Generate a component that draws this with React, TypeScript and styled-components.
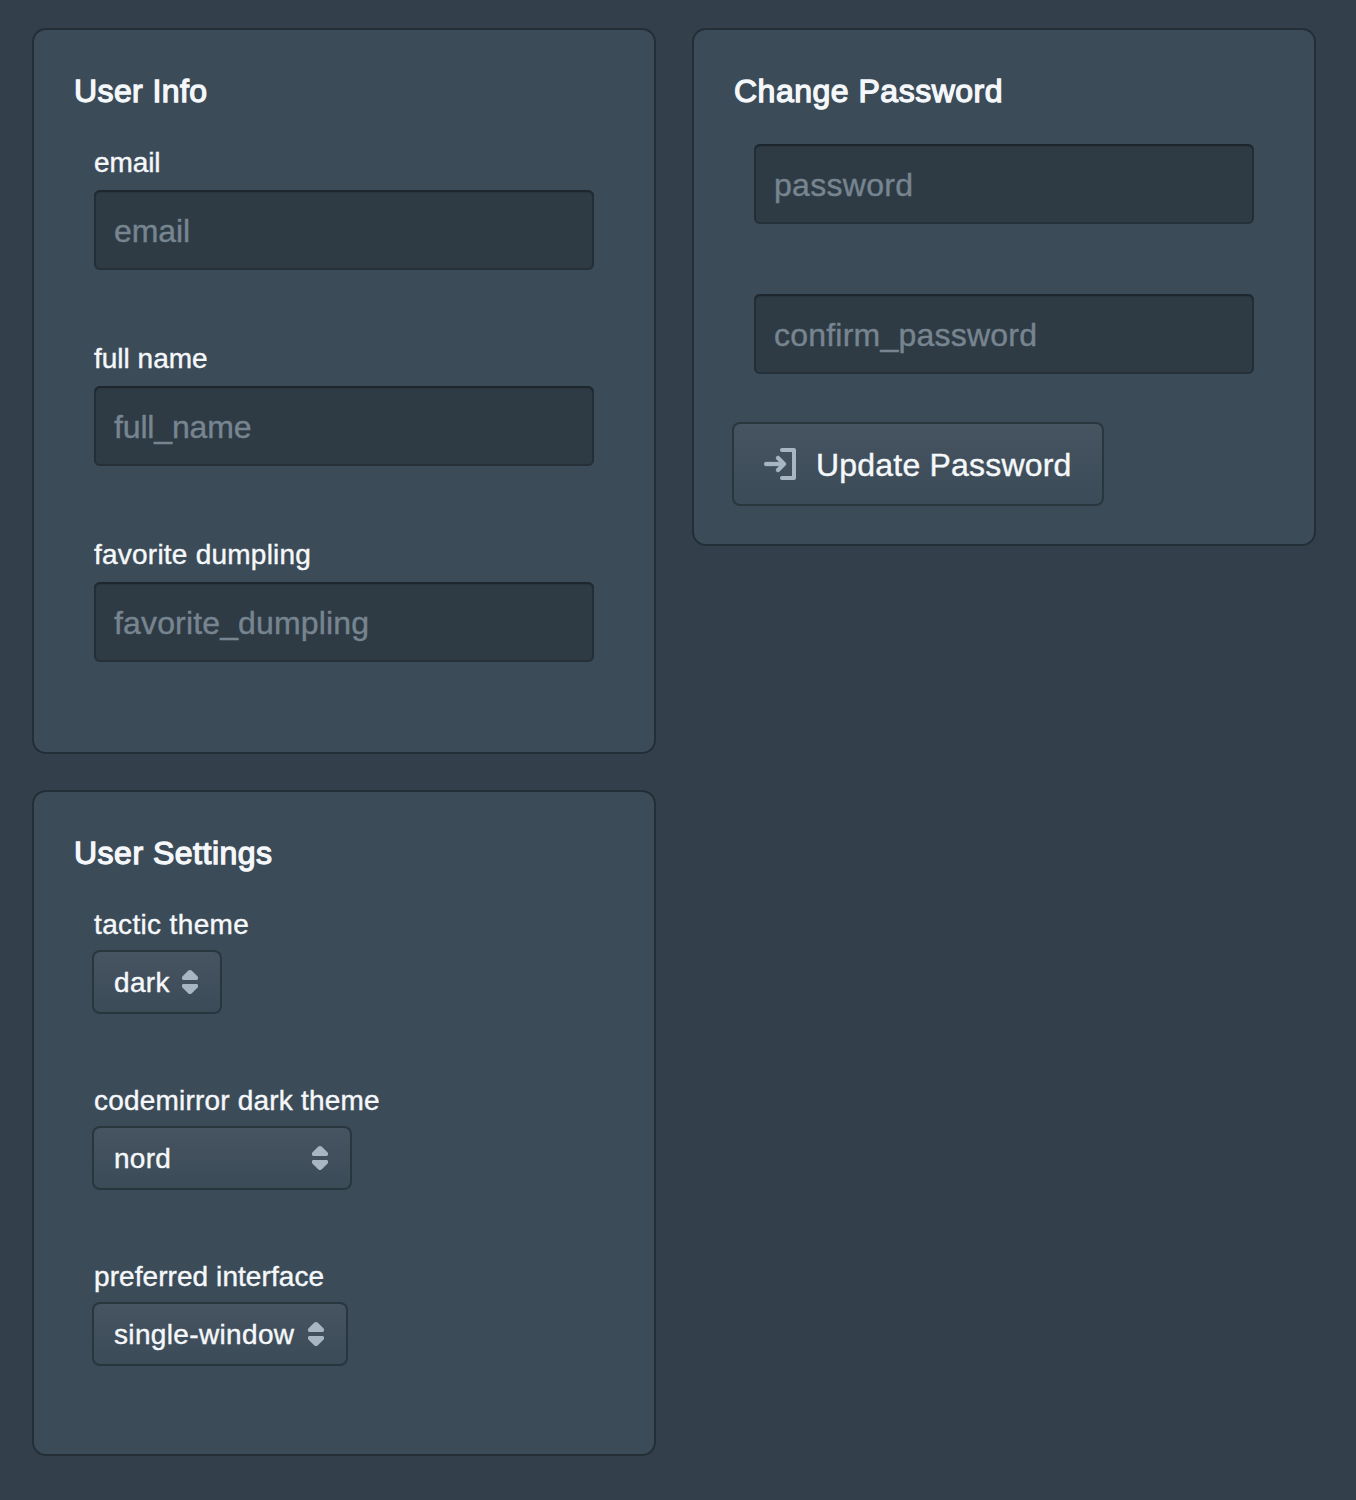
import React from "react";
import styled, { createGlobalStyle } from "styled-components";

const GlobalStyle = createGlobalStyle`
  *, *::before, *::after { box-sizing: border-box; }
  body {
    margin: 0;
    background: #333f4b;
    color: #f5f8fa;
    font-family: "Liberation Sans", Arial, sans-serif;
    -webkit-font-smoothing: antialiased;
  }
`;

const Page = styled.main`
  display: flex;
  align-items: flex-start;
  gap: 40px;
  min-height: 1500px;
  padding: 30px 34px;
`;

const Column = styled.div`
  display: flex;
  flex-direction: column;
  flex: none;
  gap: 40px;
  width: 620px;
`;

const Card = styled.section`
  padding: 40px;
  border-radius: 12px;
  background: #3c4b58;
  box-shadow: 0 0 0 2px rgba(16, 22, 26, 0.4);
`;

const Title = styled.h2<{ $track: number }>`
  margin: 0 0 32px;
  font-size: 32px;
  font-weight: 400;
  line-height: 42px;
  letter-spacing: ${(p) => p.$track}px;
  -webkit-text-stroke: 1.3px currentColor;
`;

const Fields = styled.div`
  display: flex;
  flex-direction: column;
  align-items: flex-start;
  gap: 70px;
  margin: 0 20px 50px;
`;

const Field = styled.label`
  display: flex;
  flex-direction: column;
  align-items: flex-start;
  gap: 9px;
`;

const LabelText = styled.span<{ $track: number }>`
  padding-top: 1px;
  font-size: 28px;
  line-height: 36px;
  letter-spacing: ${(p) => p.$track}px;
  white-space: nowrap;
  -webkit-text-stroke: 0.4px currentColor;
`;

const TextInput = styled.input<{ $track: number }>`
  width: 500px;
  height: 80px;
  padding: 2px 20px 0;
  border: 0;
  border-radius: 6px;
  outline: none;
  background: rgba(16, 22, 26, 0.3);
  box-shadow: inset 0 0 0 2px rgba(16, 22, 26, 0.3), inset 0 2px 2px rgba(16, 22, 26, 0.4);
  color: #f5f8fa;
  font: 400 32px "Liberation Sans", Arial, sans-serif;
  letter-spacing: ${(p) => p.$track}px;

  &::placeholder {
    color: #778590;
    opacity: 1;
    -webkit-text-stroke: 0.4px #778590;
  }
`;

const BaseButton = styled.button`
  display: flex;
  align-items: center;
  border: 0;
  border-radius: 6px;
  background: linear-gradient(rgba(255, 255, 255, 0.05), rgba(255, 255, 255, 0)) #3c4b58;
  box-shadow: 0 0 0 2px rgba(16, 22, 26, 0.4);
  color: #f5f8fa;
  font-family: inherit;
  -webkit-text-stroke: 0.4px currentColor;
  white-space: nowrap;
`;

const LargeButton = styled(BaseButton)`
  gap: 20px;
  width: 368px;
  height: 80px;
  padding: 2px 30px 0;
  font-size: 32px;
  letter-spacing: 0.2px;
`;

const SelectButton = styled(BaseButton)<{ $width: number; $track: number }>`
  justify-content: space-between;
  width: ${(p) => p.$width}px;
  height: 60px;
  padding: 0 14px 0 20px;
  font-size: 28px;
  letter-spacing: ${(p) => p.$track}px;
`;

const SelectValue = styled.span`
  padding-top: 2px;
`;

const Icon = styled.svg`
  flex: none;
  width: 32px;
  height: 32px;
  fill: #a7b6c2;
  stroke: none;
`;

const LargeIcon = styled(Icon)`
  margin-top: -2px;
`;

const LogInIcon = () => (
  <LargeIcon viewBox="0 0 16 16">
    <path
      d="M11 8c0-.28-.11-.53-.29-.71l-3-3a1.003 1.003 0 00-1.42 1.42L7.59 7H1c-.55 0-1 .45-1 1s.45 1 1 1h6.59L6.29 10.29a1.003 1.003 0 001.42 1.42l3-3c.18-.18.29-.43.29-.71z"
      stroke="#a7b6c2"
      strokeWidth="0.15"
    />
    <path d="M15 0H9c-.55 0-1 .45-1 1s.45 1 1 1h5v12H9c-.55 0-1 .45-1 1s.45 1 1 1h6c.55 0 1-.45 1-1V1c0-.55-.45-1-1-1z" />
  </LargeIcon>
);

const DoubleCaretIcon = () => (
  <Icon viewBox="0 0 16 16">
    <path d="M8 2c.3 0 .55.1.8.3l2.9 2.8c.2.2.3.4.3.7v.5c0 .4-.3.7-.7.7H4.7c-.4 0-.7-.3-.7-.7v-.5c0-.3.1-.5.3-.7l2.9-2.8c.25-.2.5-.3.8-.3zM8 14c.3 0 .55-.1.8-.3l2.9-2.8c.2-.2.3-.4.3-.7v-.5c0-.4-.3-.7-.7-.7H4.7c-.4 0-.7.3-.7.7v.5c0 .3.1.5.3.7l2.9 2.8c.25.2.5.3.8.3z" />
  </Icon>
);

const infoFields = [
  { label: "email", name: "email", track: -0.1, inputTrack: -0.1 },
  { label: "full name", name: "full_name", track: 0, inputTrack: -0.15 },
  { label: "favorite dumpling", name: "favorite_dumpling", track: 0.23, inputTrack: 0.15 },
];

const settings = [
  { label: "tactic theme", value: "dark", width: 126, track: 0.35, valueTrack: 0.35 },
  { label: "codemirror dark theme", value: "nord", width: 256, track: 0.2, valueTrack: 0.25 },
  { label: "preferred interface", value: "single-window", width: 252, track: 0.07, valueTrack: 0.35 },
];

export default function App() {
  return (
    <>
      <GlobalStyle />
      <Page>
        <Column>
          <Card>
            <Title $track={0.4}>User Info</Title>
            <Fields>
              {infoFields.map((f) => (
                <Field key={f.name}>
                  <LabelText $track={f.track}>{f.label}</LabelText>
                  <TextInput $track={f.inputTrack} placeholder={f.name} />
                </Field>
              ))}
            </Fields>
          </Card>
          <Card>
            <Title $track={0.5}>User Settings</Title>
            <Fields>
              {settings.map((s) => (
                <Field key={s.label} as="div">
                  <LabelText $track={s.track}>{s.label}</LabelText>
                  <SelectButton $width={s.width} $track={s.valueTrack}>
                    <SelectValue>{s.value}</SelectValue>
                    <DoubleCaretIcon />
                  </SelectButton>
                </Field>
              ))}
            </Fields>
          </Card>
        </Column>
        <Column>
          <Card>
            <Title $track={0.5}>Change Password</Title>
            <Fields>
              <TextInput $track={0.3} type="password" placeholder="password" />
              <TextInput $track={0.22} type="password" placeholder="confirm_password" />
            </Fields>
            <LargeButton>
              <LogInIcon />
              <span>Update Password</span>
            </LargeButton>
          </Card>
        </Column>
      </Page>
    </>
  );
}
